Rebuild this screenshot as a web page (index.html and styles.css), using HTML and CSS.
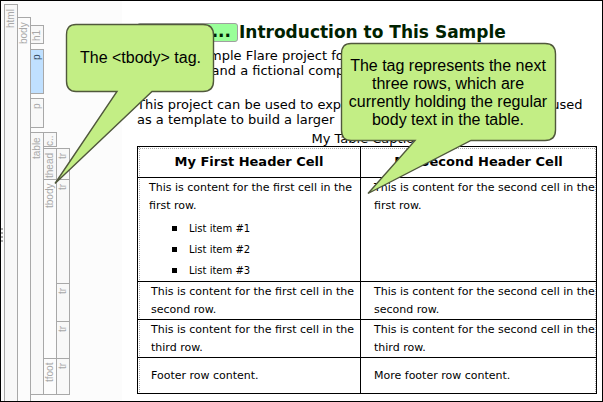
FILE: index.html
```html
<!DOCTYPE html>
<html lang="en">
<head>
<meta charset="utf-8">
<title>Introduction to This Sample</title>
<link rel="stylesheet" href="styles.css">
</head>
<body>
<div class="editor">
  <aside class="structure" aria-label="Tag structure">
    <div class="grip"></div>
    <div class="tag tag-html"><span class="label">html</span>
      <div class="tag tag-body"><span class="label">body</span>
        <div class="children">
          <div class="tag tag-h1"><span class="label">h1</span></div>
          <div class="tag tag-p selected"><span class="label">p</span></div>
          <div class="tag tag-p2"><span class="label">p</span></div>
          <div class="tag"><span class="label">table</span>
            <div class="children">
              <div class="tag tag-caption"><span class="label">c..</span></div>
              <div class="tag"><span class="label">thead</span>
                <div class="children"><div class="tag row-head"><span class="label">tr</span></div></div>
              </div>
              <div class="tag section"><span class="label">tbody</span>
                <div class="children">
                  <div class="tag row-tall"><span class="label">tr</span></div>
                  <div class="tag row"><span class="label">tr</span></div>
                  <div class="tag row row-last"><span class="label">tr</span></div>
                </div>
              </div>
              <div class="tag section"><span class="label">tfoot</span>
                <div class="children"><div class="tag row-foot"><span class="label">tr</span></div></div>
              </div>
            </div>
          </div>
        </div>
      </div>
    </div>
  </aside>
  <main class="document">
    <h1><span class="marker">...</span>Introduction to This Sample</h1>
    <p>This is a sample Flare project for<br>both a real and a fictional company.</p>
    <p>This project can be used to explore Flare features, or it may be used<br>as a template to build a larger</p>
    <table>
      <caption>My Table Caption</caption>
      <colgroup><col class="col-first"><col></colgroup>
      <thead>
        <tr><th scope="col">My First Header Cell</th><th scope="col">My Second Header Cell</th></tr>
      </thead>
      <tbody>
        <tr class="first">
          <td>This is content for the first cell in the<br>first row.
            <ul><li>List item #1</li><li>List item #2</li><li>List item #3</li></ul>
          </td>
          <td>This is content for the second cell in the<br>first row.</td>
        </tr>
        <tr><td>This is content for the first cell in the<br>second row.</td><td>This is content for the second cell in the<br>second row.</td></tr>
        <tr><td>This is content for the first cell in the<br>third row.</td><td>This is content for the second cell in the<br>third row.</td></tr>
      </tbody>
      <tfoot>
        <tr><td>Footer row content.</td><td>More footer row content.</td></tr>
      </tfoot>
    </table>
  </main>
  <div class="callout callout-tag">
    <svg width="160" height="162" viewBox="0 0 160 162" aria-hidden="true"><path d="M22 1.500H149Q159.500 1.500 159.500 12V58Q159.500 68.500 149 68.500H98L1 160.500L63 68.500H22Q12.500 68.500 12.500 58V12Q12.500 1.500 22 1.500Z"/></svg>
    <p>The &lt;tbody&gt; tag.</p>
  </div>
  <div class="callout callout-rows">
    <svg width="216" height="153" viewBox="0 0 216 153" aria-hidden="true"><path d="M11 1.500H205Q215.500 1.500 215.500 12V88Q215.500 98.500 205 98.500H131L28 151.500L75 98.500H11Q1.500 98.500 1.500 88V12Q1.500 1.500 11 1.500Z"/></svg>
    <p>The tag represents the next<br>three rows, which are<br>currently holding the regular<br>body text in the table.</p>
  </div>
</div>
</body>
</html>
```
FILE: styles.css
```css
* { box-sizing: border-box; }
body { margin: 0; background: #fff; color: #000; font-family: Verdana, "DejaVu Sans", sans-serif; }
.editor { position: relative; display: flex; min-height: 100vh; border: 1px solid #000; }

/* structure bars */
.structure { position: relative; flex: 0 0 121px; display: flex; padding: 3px 0 0 3px; background: #fcfcfc; color: #a8a8a8; font: 10px/12px "Liberation Sans", Arial, sans-serif; }
.grip { position: absolute; left: 0; top: 227px; width: 2px; height: 14px; background: repeating-linear-gradient(#aaa 0 2px, transparent 2px 4px); }
.tag { display: flex; }
/* labels are turned half round, so their bottom border is drawn on top */
.label { flex: 0 0 14px; width: 14px; padding-bottom: 4px; border: 1px solid #a8a8a8; background: #f8f8f8; writing-mode: vertical-rl; transform: rotate(180deg); text-align: right; white-space: nowrap; }
.children { display: flex; flex-direction: column; align-items: flex-start; margin-left: -1px; }
.tag-html > .label, .tag-body > .label { border-top: 0; }
.tag-body { margin: 13px 0 0 -1px; }
.tag-body > .label, .section > .label { background: #fcfcfc; }
.tag-body > .children { margin-top: 8px; }
.tag-h1 { height: 19px; margin-bottom: 5px; }
.tag-p { height: 45px; margin-bottom: 4px; }
.tag-p2 { height: 30px; margin-bottom: 4px; }
.selected .label { background: #c0e0ff; color: #304860; }
.tag-caption { height: 15px; margin-bottom: 1px; }
.section, .row { margin-top: -1px; }
.row-head { height: 32px; }
.row-tall { height: 105px; }
.row { height: 39px; }
.row-last { height: 38px; }
.row-foot { height: 37px; }

/* document */
.document { flex: 1; min-width: 0; padding: 22px 5px 7px 15px; }
h1 { display: flex; margin: 0 0 6px; font-size: 17px; line-height: 19px; color: #002200; white-space: nowrap; }
.marker { width: 101px; margin-right: 1px; padding-right: 6px; border: 1px solid #a0a0a0; border-radius: 3px; background: #99ff99; line-height: 15px; text-align: right; }
.document p { margin: 0 0 19px; font-size: 13px; line-height: 15px; white-space: nowrap; }
.document p + p { margin-bottom: 4px; }
table { width: 100%; table-layout: fixed; border-collapse: collapse; border: 1px solid #000; font-size: 11px; line-height: 18px; background: repeating-linear-gradient(#aaa 0 1px, transparent 1px 2px) 1px 0 / 1px 100% no-repeat, repeating-linear-gradient(#aaa 0 1px, transparent 1px 2px) calc(100% - 1px) 0 / 1px 100% no-repeat, repeating-linear-gradient(90deg, #aaa 0 1px, transparent 1px 2px) 0 1px / 100% 1px no-repeat; }
.col-first { width: 223px; }
caption { font-size: 13px; line-height: 15px; }
th, td { border: 1px solid #000; white-space: nowrap; }
th { padding: 5px 0; font-size: 13px; line-height: 20px; }
td { padding: 1px 0 0 13px; vertical-align: top; }
.first td:first-child { padding-left: 11px; }
tfoot td { padding-top: 9px; padding-bottom: 8px; }
ul { margin: 3px 0 0; padding: 0 0 0 40px; font-size: 10px; line-height: 21px; list-style: none; }
li { display: flex; align-items: center; margin-left: -17px; gap: 12px; }
li::before { content: ""; width: 5px; height: 5px; background: #000; }

/* callouts */
.callout { position: absolute; font: 16px/18px "Liberation Sans", Arial, sans-serif; text-align: center; white-space: nowrap; }
.callout svg { display: block; overflow: visible; fill: #c3ee85; stroke: #50583c; stroke-width: 1.4; }
.callout p { position: absolute; top: 0; right: 0; margin: 0; }
.callout-tag { left: 53px; top: 22px; }
.callout-tag p { width: 147px; padding-top: 26px; }
.callout-rows { left: 339px; top: 41px; }
.callout-rows p { width: 216px; padding-top: 15px; }
```
